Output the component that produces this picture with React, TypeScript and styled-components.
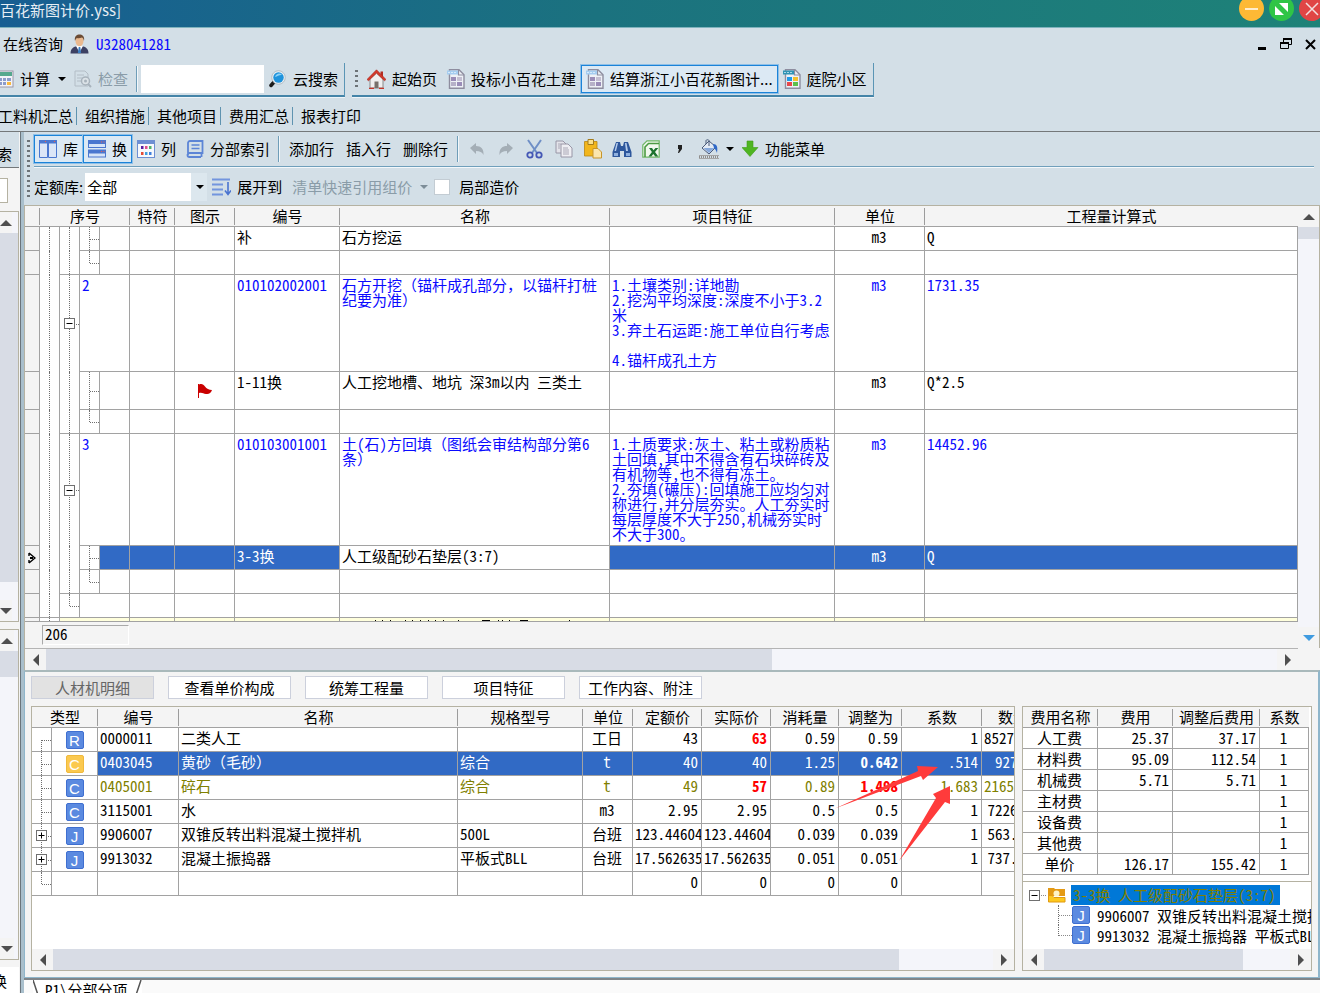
import React from "react";
import styled, { createGlobalStyle, css } from "styled-components";

const UI = '"Noto Sans CJK SC", "Noto Sans", sans-serif';
const MONO = '"Noto Sans Mono CJK SC", "Noto Sans CJK SC", "Liberation Mono", monospace';
const C = {
  bar: "#d3dfe7",
  pane: "#f4f4f4",
  line: "#a2a2a2",
  tan: "#b5b2a2",
  thumb: "#d8dce5",
  track: "#f4f5fa",
  sel: "#316ac5",
  blue: "#0a0aff",
  olive: "#808000",
  red: "#ff0000",
};

const Global = createGlobalStyle`
  *, *::before, *::after { box-sizing: border-box; }
  body { margin: 0; overflow: hidden; background: ${C.bar}; }
  button, input, select { font: inherit; color: inherit; margin: 0; }
`;

const Page = styled.div`
  display: flex;
  flex-direction: column;
  height: 100vh;
  overflow: hidden;
  background: ${C.bar};
  color: #000;
  font: 15px/20px ${UI};
  white-space: nowrap;
`;

const TitleBar = styled.header`
  display: flex;
  justify-content: space-between;
  flex: none;
  height: 28px;
  color: #e6eef4;
  background: linear-gradient(90deg, #175e92 0%, #1b727f 45%, #1e8278 100%);
  border-bottom: 1px solid #7fb3bd;
  overflow: hidden;
`;
const WindowButtons = styled.div`
  display: flex;
  gap: 5px;
  margin: -4px -4px 0 0;
`;
const RoundButton = styled.button<{ $c: string }>`
  width: 25px;
  height: 25px;
  padding: 0;
  border: 0;
  border-radius: 50%;
  background: ${(p) => p.$c};
  svg { display: block; }
`;

const AccountRow = styled.div`
  display: flex;
  align-items: center;
  flex: none;
  height: 34px;
  padding: 0 2px 2px 3px;
  gap: 7px;
`;
const Account = styled.a`
  font-family: ${MONO};
  color: ${C.blue};
  text-decoration: none;
`;
const ChildButtons = styled.div`
  display: flex;
  gap: 8px;
  margin-left: auto;
`;
const FlatButton = styled.button`
  width: 16px;
  height: 16px;
  padding: 0;
  border: 0;
  background: none;
  svg { display: block; }
`;

const Rows = styled.div`
  display: flex;
  flex: none;
  gap: 7px;
  height: 36px;
  padding-top: 1px;
`;
const BarGroup = styled.div`
  display: flex;
  align-items: center;
  height: 34px;
  padding: 0 1px 1px 0;
  border-right: 1px solid #5a95b5;
  border-bottom: 2px solid #4484a8;
  box-shadow: 0 1px 0 #eef4f8;
`;
const Tool = styled.button<{ $on?: boolean; $off?: boolean; $cut?: boolean }>`
  display: flex;
  align-items: center;
  flex: none;
  gap: 6px;
  height: 28px;
  padding: 0 5px;
  border: 0;
  background: none;
  ${(p) => p.$cut && css`margin-left: -9px;`}
  ${(p) => p.$off && css`color: #8a9ca8;`}
  ${(p) => p.$on && css`background: #dce9f4; box-shadow: inset 0 0 0 1px #1b83d8, 0 0 0 1px #8fc0e8;`}
  svg { display: block; flex: none; }
`;
const TextTool = styled(Tool)`
  padding: 0 6px;
`;
const IconTool = styled(Tool)`
  width: 29px;
  justify-content: center;
`;
const DropTool = styled.button`
  width: 14px;
  height: 28px;
  padding: 0;
  border: 0;
  background: none;
  svg { display: block; margin: auto; }
`;
const Sep = styled.span`
  flex: none;
  width: 2px;
  height: 26px;
  margin: 0 3px;
  border-left: 1px solid #6f9db8;
  border-right: 1px solid #f2f7fa;
`;
const Grip = styled.span<{ $tall?: boolean }>`
  flex: none;
  align-self: center;
  width: 3px;
  height: ${(p) => (p.$tall ? 58 : 18)}px;
  margin: 0 4px 0 3px;
  background: repeating-linear-gradient(#6d7377 0 2px, transparent 2px 5px);
`;
const SearchBox = styled.input`
  width: 123px;
  height: 28px;
  border: 0;
  padding: 0 4px;
  background: #fff;
`;

const ViewTabs = styled.nav`
  display: flex;
  align-items: center;
  flex: none;
  height: 34px;
  padding-top: 3px;
  border-bottom: 1px solid #74787a;
  overflow: hidden;
`;
const ViewTab = styled.a<{ $first?: boolean }>`
  margin-left: ${(p) => (p.$first ? -2 : 8)}px;
  padding-right: 3px;
  height: 18px;
  line-height: 18px;
  color: inherit;
  text-decoration: none;
  border-right: 1px solid #5f93b0;
  &:last-child { border: 0; }
`;

const Workspace = styled.div`
  display: flex;
  flex: 1;
  min-height: 0;
`;

const Side = styled.aside`
  display: flex;
  flex-direction: column;
  flex: none;
  width: 24px;
  border-right: 3px solid #a9bfcc;
  box-shadow: inset -1px 0 0 #6b757c;
  background: ${C.pane};
  padding-right: 2px;
`;
const SideCut = styled.div<{ $h: number; $r: number; $bg: string; $head?: boolean }>`
  display: flex;
  flex: none;
  align-items: center;
  justify-content: flex-end;
  height: ${(p) => p.$h}px;
  padding-top: ${(p) => (p.$head ? 8 : 2)}px;
  padding-right: ${(p) => p.$r}px;
  background: ${(p) => p.$bg};
  border-bottom: ${(p) => (p.$head ? "1px solid #74787a" : 0)};
  overflow: hidden;
`;
const SideField = styled.div`
  flex: none;
  width: 8px;
  height: 25px;
  margin: 10px 0 8px;
  background: #fff;
  border: solid ${C.tan};
  border-width: 1px 1px 1px 0;
`;
const SideScroll = styled.div<{ $grow: number }>`
  display: flex;
  flex: ${(p) => p.$grow} 0 0;
  flex-direction: column;
  min-height: 0;
  margin-bottom: 7px;
  border: solid ${C.tan};
  border-width: 1px 1px 1px 0;
  background: ${C.track};
`;

const Main = styled.main`
  display: flex;
  flex: 1;
  flex-direction: column;
  min-width: 0;
`;
const GridTools = styled.div`
  display: flex;
  flex: none;
  height: 73px;
`;
const ToolLines = styled.div`
  flex: 1;
  min-width: 0;
`;
const ToolLine = styled.div`
  display: flex;
  align-items: center;
  height: 35px;
  margin-right: 6px;
  border-bottom: 1px solid #6f9fbb;
  box-shadow: 0 1px 0 #f4f8fb;
`;
const FilterLine = styled.div`
  display: flex;
  align-items: center;
  height: 38px;
  padding-top: 1px;
`;
const SelectBox = styled.span`
  position: relative;
  display: flex;
  width: 122px;
  height: 28px;
  margin: 0 0 0 2px;
  background: linear-gradient(90deg, #fff 106px, #dce7ee 106px);
  svg { position: absolute; right: 3px; top: 12px; pointer-events: none; }
`;
const Select = styled.select`
  width: 100%;
  padding: 0 2px;
  border: 0;
  appearance: none;
  background: none;
`;
const Check = styled.input`
  appearance: none;
  width: 16px;
  height: 16px;
  margin: 0 9px 0 3px;
  background: #fff;
  border: 1px solid #c3ccd3;
`;

const GridBlock = styled.section`
  display: flex;
  flex: none;
  border-top: 1px solid ${C.tan};
  border-left: 1px solid ${C.tan};
  background: ${C.pane};
`;
const GridLeft = styled.div`
  flex: 1;
  min-width: 0;
`;

const Table = styled.table<{ $extra?: number }>`
  width: calc(100% + ${(p) => p.$extra || 0}px);
  table-layout: fixed;
  border-collapse: separate;
  border-spacing: 0;
  background: #fff;
  font: 15px/15px ${MONO};
  white-space: pre;
`;
const Th = styled.th`
  position: relative;
  height: 21px;
  padding: 0;
  font-weight: 400;
  line-height: 20px;
  text-align: center;
  overflow: hidden;
  background: ${C.pane};
  border-bottom: 1px solid ${C.line};
  &:not(:last-child)::after {
    content: "";
    position: absolute;
    right: 0;
    top: 2px;
    bottom: 1px;
    border-right: 1px solid #9c9c9c;
  }
`;
const Tr = styled.tr<{ $h: number }>`
  height: ${(p) => p.$h}px;
`;
type TdProps = { $a?: "left" | "center" | "right"; $c?: string; $bg?: string; $b?: boolean; $mid?: boolean };
const Td = styled.td<TdProps>`
  padding: 2px 3px 0 2px;
  vertical-align: top;
  overflow: hidden;
  text-align: ${(p) => p.$a || "left"};
  color: ${(p) => p.$c || "#000"};
  background: ${(p) => p.$bg || "#fff"};
  font-weight: ${(p) => (p.$b ? 700 : 400)};
  border-right: 1px solid ${C.line};
  border-bottom: 1px solid ${C.line};
  ${(p) => p.$mid && css`
    vertical-align: middle;
    padding: 0;
    svg, span { display: block; margin: 0 auto; }
  `}
`;
const TreeTd = styled.td<{ $v?: "full" | "top" | "bottom"; $h?: boolean; $open?: boolean }>`
  position: relative;
  padding: 0;
  background: #fff;
  vertical-align: middle;
  border-right: 1px solid ${C.line};
  border-bottom: ${(p) => (p.$open ? 0 : 1)}px solid ${C.line};
  ${(p) => p.$v && css`
    &::before {
      content: "";
      position: absolute;
      left: 9px;
      top: ${p.$v === "bottom" ? "50%" : "0"};
      bottom: ${p.$v === "top" ? "50%" : "0"};
      border-left: 1px dotted #6e6e6e;
    }
  `}
  ${(p) => p.$h && css`
    &::after {
      content: "";
      position: absolute;
      left: 10px;
      right: 0;
      top: 50%;
      border-top: 1px dotted #6e6e6e;
    }
  `}
`;
const Expander = styled.button`
  position: relative;
  z-index: 1;
  display: block;
  flex: none;
  width: 11px;
  height: 11px;
  margin: 0 auto;
  padding: 0;
  border: 1px solid #707070;
  background: #fff;
  svg { display: block; }
`;
const Edge = styled.td`
  padding: 0;
  background: ${C.pane};
  border-right: 1px solid ${C.line};
  border-bottom: 1px solid ${C.line};
  svg { display: block; margin: 0 auto; }
`;
const Peek = styled.td`
  height: 4px;
  padding: 0;
  background: #ffffdc;
  border-right: 1px solid ${C.line};
  border-bottom: 1px solid ${C.line};
  svg { display: block; }
`;
const CountBar = styled.div`
  display: flex;
  align-items: center;
  height: 27px;
  padding-left: 17px;
  border-bottom: 1px solid #b4b4b4;
`;
const Count = styled.output`
  width: 87px;
  height: 20px;
  padding-left: 2px;
  font: 15px/16px ${MONO};
  border: solid;
  border-width: 1px;
  border-color: #a9a9a9 #fff #fff #a9a9a9;
`;

const HScroll = styled.div`
  display: flex;
  flex: none;
  height: 21px;
  background: ${C.track};
`;
const VScroll = styled.div`
  display: flex;
  flex-direction: column;
  flex: none;
  width: 22px;
  margin-bottom: 22px;
  border-right: 1px solid ${C.tan};
  background: ${C.track};
`;
const Arrow = styled.button<{ $w?: number }>`
  display: flex;
  align-items: center;
  justify-content: center;
  flex: none;
  width: ${(p) => p.$w || 21}px;
  height: 21px;
  padding: 0;
  border: 0;
  background: ${C.pane};
`;
const Lane = styled.div<{ $col?: boolean }>`
  display: flex;
  flex: 1;
  flex-direction: ${(p) => (p.$col ? "column" : "row")};
  min-height: 0;
`;
const Thumb = styled.div<{ $p: number }>`
  flex: 0 0 ${(p) => p.$p}%;
  background: ${C.thumb};
`;

const Detail = styled.section`
  display: flex;
  flex: 1;
  flex-direction: column;
  min-height: 0;
  padding: 4px 6px 6px 6px;
  background: ${C.pane};
  border: solid #8fb6cb;
  border-width: 2px 2px 1px 1px;
  border-top-color: #a9b9bb;
`;
const DetailTabs = styled.div`
  display: flex;
  flex: none;
  gap: 14px;
  font-family: ${MONO};
`;
const DetailTab = styled.button<{ $on?: boolean }>`
  width: 123px;
  height: 23px;
  padding: 0;
  line-height: 19px;
  border: 1px solid #ccd0dc;
  background: ${(p) => (p.$on ? "#e2e2e2" : "#fff")};
  color: ${(p) => (p.$on ? "#666" : "#000")};
`;
const DetailBody = styled.div`
  display: flex;
  flex: 1;
  gap: 7px;
  min-height: 0;
  margin-top: 7px;
`;
const Frame = styled.div`
  position: relative;
  display: flex;
  flex: 1;
  flex-direction: column;
  justify-content: space-between;
  min-width: 0;
  border: 1px solid ${C.tan};
  background: #fff;
  overflow: hidden;
`;
const RightFrame = styled(Frame)`
  flex: 0 0 290px;
`;
const CostArea = styled.div`
  padding-right: 2px;
  padding-bottom: 6px;
  border-bottom: 1px solid ${C.tan};
`;
const Marks = styled.svg`
  position: absolute;
  right: 60px;
  top: 53px;
  pointer-events: none;
`;
const Badge = styled.span<{ $gold?: boolean }>`
  display: block;
  flex: none;
  width: 18px;
  height: 18px;
  border: 1px solid ${(p) => (p.$gold ? "#f0b93c" : "#3f6fd0")};
  border-radius: 2px;
  background: ${(p) => (p.$gold ? "#fbc94f" : "#5b8ae0")};
  color: #fff;
  font: 15px/17px "Liberation Sans", sans-serif;
  text-align: center;
`;
const CostTree = styled.ul`
  flex: 1;
  margin: 3px 0 0;
  padding: 0 0 0 6px;
  list-style: none;
  font: 15px/19px ${MONO};
  overflow: hidden;
`;
const Node = styled.li<{ $child?: boolean }>`
  display: flex;
  align-items: center;
  gap: 7px;
  height: 20px;
  ${(p) => p.$child && css`
    padding-left: 29px;
    &::before {
      content: "";
      flex: none;
      width: 14px;
      height: 20px;
      margin-right: -7px;
      border-left: 1px dotted #6e6e6e;
      background: repeating-linear-gradient(90deg, #8a8a8a 0 1px, transparent 1px 2px) 0 10px / 100% 1px no-repeat;
    }
    &:last-child::before { height: 11px; align-self: flex-start; }
  `}
`;
const NodeBox = styled.span`
  flex: none;
  width: 18px;
  margin-right: -7px;
  background: repeating-linear-gradient(90deg, #8a8a8a 0 1px, transparent 1px 2px) 0 5px / 100% 1px no-repeat;
  button { margin: 0; }
`;
const NodeSel = styled.span`
  height: 20px;
  margin-left: -2px;
  padding: 0 4px 0 2px;
  background: #0078d7;
  color: ${C.olive};
`;
const BottomTabs = styled.nav`
  display: flex;
  flex: none;
  height: 15px;
  padding-left: 9px;
  background: #fafafa;
  border-top: 2px solid #80868a;
  font-family: ${MONO};
  overflow: hidden;
`;
const BottomTab = styled.a`
  display: flex;
  align-items: flex-start;
  gap: 6px;
  height: 20px;
  background: #fff;
  color: inherit;
  text-decoration: none;
  svg { display: block; }
`;

/* ---------- glyphs ---------- */
const Tri = ({ d = "down", c = "#4f4f4f", s = 6 }: { d?: "up" | "down" | "left" | "right"; c?: string; s?: number }) => {
  const pts = {
    up: `0,${s} ${2 * s},${s} ${s},0`,
    down: `0,0 ${2 * s},0 ${s},${s}`,
    left: `${s},0 ${s},${2 * s} 0,${s}`,
    right: `0,0 0,${2 * s} ${s},${s}`,
  }[d];
  const flat = d === "up" || d === "down";
  return (
    <svg width={flat ? 2 * s : s} height={flat ? s : 2 * s}>
      <polygon points={pts} fill={c} />
    </svg>
  );
};
const I = ({ children }: { children: React.ReactNode }) => (
  <svg width="18" height="18" viewBox="0 0 18 18" fill="none">{children}</svg>
);
const Plus = ({ plus }: { plus?: boolean }) => (
  <svg width="9" height="9"><path d={plus ? "M1.5 4.5h6M4.5 1.5v6" : "M1.5 4.5h6"} stroke="#000" /></svg>
);
const CalcIcon = () => (
  <I>
    <rect x="1" y="1" width="16" height="16" fill="#f3f3f8" stroke="#9a96a8" />
    <rect x="2" y="2" width="14" height="4" fill="#55a88e" />
    <path d="M3 8h3v3H3zM7 8h3v3H7zM3 12h3v3H3zM7 12h3v3H7zM11 8h4v3h-4z" fill="#8c9ccb" />
    <path d="M11 12h4v3h-4z" fill="#f9b93e" />
  </I>
);
const CheckIcon = () => (
  <I>
    <path d="M1 1h10l3 3v5M14 16H1V1" stroke="#b3bdc6" />
    <path d="M3 5h7M3 8h6M3 11h4" stroke="#b3bdc6" />
    <circle cx="11.500" cy="11" r="4" fill="#dce3e8" stroke="#a8b3bc" strokeWidth="1.500" />
    <circle cx="11.500" cy="11" r="1.500" fill="#a8b3bc" />
    <path d="M14 14l3 3" stroke="#a8b3bc" strokeWidth="2" />
  </I>
);
const Magnifier = () => (
  <I>
    <path d="M5 12l-3 3.500" stroke="#1b1b1b" strokeWidth="3.500" strokeLinecap="round" />
    <circle cx="9.500" cy="7.500" r="6.800" fill="#e9eef1" stroke="#a9b4bd" strokeWidth=".8" />
    <circle cx="9.500" cy="7.500" r="5.200" fill="#1f93dc" />
    <path d="M6 7a4 4 0 0 1 7-2c-2.500-.5-4.500 1.500-7 2z" fill="#8ed3f7" />
  </I>
);
const House = () => (
  <svg width="19" height="20" viewBox="0 0 19 20">
    <path d="M3 10v9h13v-9L9.500 4z" fill="#efefef" stroke="#8a8a8a" />
    <path d="M13.500 2.500H16V8h-2.500z" fill="#b32d22" />
    <path d="M0 10.500L9.500.8l9.500 9.700-1.600 1.200-7.900-7.600-7.900 7.600z" fill="#d5392b" stroke="#a82318" strokeWidth=".6" />
    <path d="M7.500 12.500h4V19h-4z" fill="#77706a" />
    <path d="M2 19.300h5M12 19.300h5" stroke="#c83428" strokeWidth="1.200" />
  </svg>
);
const Doc = ({ vivid }: { vivid?: boolean }) => (
  <svg width="18" height="20" viewBox="0 0 18 20" fill="none">
    <path d="M2.500.8h9.500l5 5v13.400H2.500z" fill="#eef1f6" stroke="#8e8d9f" strokeWidth="1.400" />
    <path d="M11.500 1v5H17" stroke="#8e8d9f" strokeWidth="1.200" />
    <rect x="0" y="1.500" width="11" height="4" fill={vivid ? "#2f93b4" : "#a5cdf0"} />
    <path d="M1 3.500h9" stroke={vivid ? "#a7d7e6" : "#d6e9f9"} strokeDasharray="2 1" />
    <rect x="4" y="8" width="5" height="4" fill={vivid ? "#1e9ae8" : "#9a8db8"} />
    <rect x="10" y="8" width="5" height="4" fill={vivid ? "#f3c02c" : "#c4bfd2"} />
    <rect x="4" y="13" width="5" height="4" fill={vivid ? "#e7474a" : "#b6b1c8"} />
    <rect x="10" y="13" width="5" height="4" fill={vivid ? "#5cc04c" : "#9a8db8"} />
  </svg>
);
const Person = () => (
  <svg width="19" height="20" viewBox="0 0 19 20">
    <path d="M.5 19.500c0-5 3-7.500 9-7.500s9 2.500 9 7.500z" fill="#3d4163" />
    <path d="M6 12l3.500 6.500L13 12l-3.500-1z" fill="#fff" />
    <path d="M8.700 13h1.600l.8 6H7.900z" fill="#3a7fc4" />
    <ellipse cx="9.500" cy="7" rx="4" ry="5.300" fill="#eab98f" />
    <path d="M5 7C4 2 7 .5 9.500.5S15 2 14 7c-.5-2-1-3-2-3.500-2 .8-4 .8-5 .5-1 .5-1.500 1.500-2 3z" fill="#6b4c35" />
  </svg>
);
const Panels = ({ rows }: { rows?: boolean }) => (
  <I>
    {rows ? (
      <>
        <path d="M0 0h18v8H0zM0 9.500h18v8H0z" fill="#4a77cf" />
        <path d="M1 4h16v3H1zM1 13.500h16v3H1z" fill="#d6e4f7" />
        <path d="M13 2h1M15.500 2h1M13 11.500h1M15.500 11.500h1" stroke="#f05b4c" />
      </>
    ) : (
      <>
        <path d="M.5.500h8v17h-8zM9.500.500h8v17h-8z" fill="#dbe6f7" stroke="#4a77cf" />
        <path d="M0 0h18v3.500H0z" fill="#4a77cf" />
        <path d="M6 1.500h1M15 1.500h1" stroke="#f05b4c" />
      </>
    )}
  </I>
);
const ColumnsIcon = () => (
  <I>
    <rect x=".5" y=".5" width="17" height="17" fill="#f7f9fd" stroke="#6d8fd2" />
    <path d="M0 0h18v4H0z" fill="#6d8fd2" />
    <path d="M4 6h2.500v3H4z" fill="#5a1f9f" /><path d="M8 6h2.500v3H8z" fill="#e0508a" /><path d="M12 6h2.500v3H12z" fill="#4fb36c" />
    <path d="M4 12h2.500v3H4z" fill="#e44b35" /><path d="M8 12h2.500v3H8z" fill="#3f9fdc" /><path d="M12 12h2.500v3H12z" fill="#3f7fdc" />
  </I>
);
const BookIcon = () => (
  <I>
    <path d="M4 1h12.500v12H3.500a2 2 0 0 0 0 4H15M2 15V3a2 2 0 0 1 2-2M15.500 13v4" stroke="#5c85d6" strokeWidth="1.800" />
    <path d="M5.500 5h8M5.500 8.500h8" stroke="#5c85d6" strokeWidth="1.600" />
  </I>
);
const Undo = ({ flip }: { flip?: boolean }) => (
  <svg width="16" height="14" viewBox="0 0 16 14">
    <path
      d={flip ? "M15 6L9 1v3C4 4 1 7 1.500 13 3 10 5 9 9 9v3z" : "M1 6l6-5v3c5 0 8 3 7.500 9C13 10 11 9 7 9v3z"}
      fill="#a4aeb6"
    />
  </svg>
);
const Scissors = () => (
  <svg width="17" height="20" viewBox="0 0 17 20" fill="none">
    <path d="M2 1l9 13M15 1L6 14" stroke="#6f8fc6" strokeWidth="2" />
    <circle cx="4" cy="16" r="2.700" stroke="#4457b5" strokeWidth="1.800" />
    <circle cx="13" cy="16" r="2.700" stroke="#4457b5" strokeWidth="1.800" />
  </svg>
);
const CopyIcon = () => (
  <I>
    <path d="M1 1h7l3 3v9H1z" fill="#e3e3ea" stroke="#9896a6" />
    <path d="M6 4h7l4 4v9H6z" fill="#eeeef3" stroke="#9896a6" />
    <path d="M3 4h3M3 6h2M3 8h2M8 8h5M8 10h6M8 12h6M8 14h6" stroke="#aaa8b6" />
  </I>
);
const Paste = () => (
  <svg width="18" height="20" viewBox="0 0 18 20">
    <path d="M.5 2.500h12.500V17H.5z" fill="#f2b61c" stroke="#b98512" strokeWidth=".8" />
    <path d="M4 .5h5.500v5H4z" fill="#fbe08a" stroke="#a37b1c" />
    <path d="M9 9.500h5l3.500 3.500v6H9z" fill="#fbe6ae" stroke="#c7952a" />
  </svg>
);
const Binoculars = () => (
  <svg width="20" height="17" viewBox="0 0 20 17">
    <path d="M4 1h4l1 4h2l1-4h4l3.500 10v5H12v-6H8v6H.5v-5z" fill="#2e579c" />
    <path d="M4.500 2H6L4 10H2.500zM13 2h1.500l1.500 8h-2z" fill="#b7cdec" />
    <path d="M2 12h4v3H2zM14 12h4v3h-4z" fill="#8fb0de" />
  </svg>
);
const Excel = () => (
  <I>
    <path d="M5 .8h12.200v16.400H.8V5z" fill="#f1f8ee" stroke="#6fb765" strokeWidth="1.200" />
    <path d="M3 17V7l3.500-3.500H17" stroke="#4b9a42" strokeWidth="1.600" fill="none" />
    <path d="M7 8h3l1.500 2.200L13.500 8h2.800l-3.300 4 3.300 4.500h-3L11.300 14l-2 2.500H6.500l3.400-4.500z" fill="#1d7430" />
  </I>
);
const Bucket = () => (
  <svg width="20" height="20" viewBox="0 0 20 20" fill="none">
    <path d="M3 9l7-7 7 6-7 7z" fill="#e3eaf4" stroke="#4a5a78" />
    <path d="M4.500 9h11L10 14z" fill="#87a9dc" />
    <path d="M7 5V1.500c0-1 3-1 3 0V7" stroke="#4a5a78" />
    <path d="M14 5c4 0 5 3 4 9-1-3-2-4-3-5z" fill="#2f68c8" />
    <path d="M0 18h20" stroke="#8f8f8f" strokeWidth="3" strokeDasharray="1 1" />
    <path d="M0 16.500h20M0 19.500h20" stroke="#a6a6a6" />
  </svg>
);
const DownArrow = () => (
  <svg width="17" height="18" viewBox="0 0 17 18"><path d="M5 1h6v6.500h5L8 16.500 0 7.500h5z" fill="#4fb522" stroke="#3f9a1a" strokeWidth=".6" /></svg>
);
const Expand = () => (
  <svg width="19" height="18" viewBox="0 0 19 18" fill="none">
    <path d="M0 1.500h18M0 6.500h11M0 11.500h11M0 16.500h11" stroke="#7395de" strokeWidth="2" />
    <path d="M16 4v12M13 12.500l3 4 3-4" stroke="#4a74d0" strokeWidth="1.600" />
  </svg>
);
const Flag = () => (
  <svg width="14" height="14" viewBox="0 0 14 14">
    <path d="M.5 0v14" stroke="#c00" /><path d="M1 .5c3-1 4.500 0 6 2S11 6 14 6c-1 3-3 4.500-6 4S4 8 1 9z" fill="#c90000" />
  </svg>
);
const Folder = () => (
  <svg width="19" height="16" viewBox="0 0 19 16">
    <path d="M1 1h6l1 1h10v7H1z" fill="#e49a14" /><circle cx="9.500" cy="6.500" r="3" fill="#fff3c4" />
    <path d="M1.500 8.500H5l2 2h11v4.500H1.500z" fill="#fdc81e" stroke="#e09a10" />
  </svg>
);

/* ---------- data ---------- */
const mainCols = [15, 20, 20, 20, 30, 45, 60, 105, 270, 225, 90];

type Rest = { flag?: boolean; code?: string; name?: string; feat?: string; unit?: string; qty?: string; c?: string; sel?: boolean };
const RestCells = ({ flag, code, name, feat, unit, qty, c, sel }: Rest) => {
  const s = sel ? { $bg: C.sel, $c: "#fff" } : { $c: c };
  return (
    <>
      <Td {...s} />
      <Td {...s} $mid>{flag && <Flag />}</Td>
      <Td {...s}>{code}</Td>
      <Td $c={c}>{name}</Td>
      <Td {...s}>{feat}</Td>
      <Td {...s} $a="center">{unit}</Td>
      <Td {...s}>{qty}</Td>
    </>
  );
};

type Part = {
  k: string; code: string; name: string; spec: string; unit: string;
  p: string; a: string; u: string; t: string; f: string; q: string;
  hot?: boolean; sel?: boolean; adj?: boolean; c?: string;
};
const parts: Part[] = [
  { k: "R", code: "0000011", name: "二类人工", spec: "", unit: "工日", p: "43", a: "63", u: "0.59", t: "0.59", f: "1", q: "8527.246", hot: true },
  { k: "C", code: "0403045", name: "黄砂（毛砂）", spec: "综合", unit: "t", p: "40", a: "40", u: "1.25", t: "0.642", f: ".514", q: "9278.8", sel: true, adj: true },
  { k: "C", code: "0405001", name: "碎石", spec: "综合", unit: "t", p: "49", a: "57", u: "0.89", t: "1.498", f: "1.683", q: "21650.534", hot: true, adj: true, c: C.olive },
  { k: "C", code: "3115001", name: "水", spec: "", unit: "m3", p: "2.95", a: "2.95", u: "0.5", t: "0.5", f: "1", q: "7226.48" },
  { k: "J", code: "9906007", name: "双锥反转出料混凝土搅拌机", spec: "500L", unit: "台班", p: "123.44604", a: "123.44604", u: "0.039", t: "0.039", f: "1", q: "563.665" },
  { k: "J", code: "9913032", name: "混凝土振捣器", spec: "平板式BLL", unit: "台班", p: "17.562635", a: "17.562635", u: "0.051", t: "0.051", f: "1", q: "737.101" },
  { k: "", code: "", name: "", spec: "", unit: "", p: "0", a: "0", u: "0", t: "0", f: "", q: "" },
];
const partCols = [20, 46, 81, 0, 125, 50, 69, 69, 68, 63, 80, 62];

const costs = [
  ["人工费", "25.37", "37.17"],
  ["材料费", "95.09", "112.54"],
  ["机械费", "5.71", "5.71"],
  ["主材费", "", ""],
  ["设备费", "", ""],
  ["其他费", "", ""],
  ["单价", "126.17", "155.42"],
];

const Cols = ({ w }: { w: number[] }) => (
  <colgroup>{w.map((n, i) => <col key={i} width={n || undefined} />)}</colgroup>
);

const feat2 = "1.土壤类别:详地勘\n2.挖沟平均深度:深度不小于3.2\n米\n3.弃土石运距:施工单位自行考虑\n\n4.锚杆成孔土方";
const feat3 = "1.土质要求:灰土、粘土或粉质粘\n土回填,其中不得含有石块碎砖及\n有机物等,也不得有冻土。\n2.夯填(碾压):回填施工应均匀对\n称进行,并分层夯实。人工夯实时\n每层厚度不大于250,机械夯实时\n不大于300。";

const Box = ({ plus }: { plus?: boolean }) => (
  <Expander aria-label={plus ? "展开" : "折叠"}><Plus plus={plus} /></Expander>
);

const MainGrid = () => (
  <Table>
    <Cols w={[...mainCols, 0]} />
    <thead>
      <tr>
        <Th />
        <Th colSpan={4}>序号</Th>
        {["特符", "图示", "编号", "名称", "项目特征", "单位", "工程量计算式"].map((t) => <Th key={t}>{t}</Th>)}
      </tr>
    </thead>
    <tbody>
      <Tr $h={24}>
        <Edge /><TreeTd $v="full" $open /><TreeTd $v="full" $open /><TreeTd $v="full" $h /><Td />
        <RestCells code="补" name="石方挖运" unit="m3" qty="Q" />
      </Tr>
      <Tr $h={24}>
        <Edge /><TreeTd $v="full" $open /><TreeTd $v="full" /><TreeTd $v="top" $h /><Td />
        <RestCells />
      </Tr>
      <Tr $h={97}>
        <Edge /><TreeTd $v="full" $open /><TreeTd $v="full" $h $open><Box /></TreeTd><Td colSpan={2} $c={C.blue}>2</Td>
        <RestCells c={C.blue} code="010102002001" name={"石方开挖（锚杆成孔部分，以锚杆打桩\n纪要为准）"} feat={feat2} unit="m3" qty="1731.35" />
      </Tr>
      <Tr $h={38}>
        <Edge /><TreeTd $v="full" $open /><TreeTd $v="full" $open /><TreeTd $v="full" $h /><Td />
        <RestCells flag code="1-11换" name="人工挖地槽、地坑 深3m以内 三类土" unit="m3" qty="Q*2.5" />
      </Tr>
      <Tr $h={24}>
        <Edge /><TreeTd $v="full" $open /><TreeTd $v="full" /><TreeTd $v="top" $h /><Td />
        <RestCells />
      </Tr>
      <Tr $h={112}>
        <Edge /><TreeTd $v="full" $open /><TreeTd $v="full" $h $open><Box /></TreeTd><Td colSpan={2} $c={C.blue}>3</Td>
        <RestCells c={C.blue} code="010103001001" name={"土(石)方回填（图纸会审结构部分第6\n条）"} feat={feat3} unit="m3" qty="14452.96" />
      </Tr>
      <Tr $h={24}>
        <Edge>
          <svg width="8" height="12" viewBox="0 0 8 12" fill="none"><path d="M1 1v3M1 8v3M1 1l6 5-6 5" stroke="#000" strokeWidth="1.400" /><path d="M2 6h3" stroke="#000" strokeWidth="2" /></svg>
        </Edge>
        <TreeTd $v="full" $open /><TreeTd $v="full" $open /><TreeTd $v="full" $h /><Td $bg={C.sel} />
        <RestCells sel code="3-3换" name="人工级配砂石垫层(3:7)" unit="m3" qty="Q" />
      </Tr>
      <Tr $h={24}>
        <Edge /><TreeTd $v="full" $open /><TreeTd $v="full" /><TreeTd $v="top" $h /><Td />
        <RestCells />
      </Tr>
      <Tr $h={24}>
        <Edge /><TreeTd $v="full" /><TreeTd $v="top" $h /><Td colSpan={2} />
        <RestCells />
      </Tr>
      <Tr $h={4}>
        <Edge /><TreeTd $v="full" />
        <Peek colSpan={3} /><Peek /><Peek /><Peek />
        <Peek>
          <svg width="240" height="3">
            <path d="M35 2.500h1M42 2.500h1M50 2.500h1M65 2.500h1M72 2.500h1M80 2.500h1M88 2.500h1M95 2.500h1M103 2.500h1M118 2.500h1M142 2.500h8M158 2.500h1M162 2.500h1M169 2.500h1M180 2.500h8M229 2.500h1" stroke="#000" />
          </svg>
        </Peek>
        <Peek /><Peek /><Peek />
      </Tr>
    </tbody>
  </Table>
);

const PartsGrid = () => (
  <Table $extra={30}>
    <Cols w={partCols} />
    <thead>
      <tr>
        <Th colSpan={2}>类型</Th>
        {["编号", "名称", "规格型号", "单位", "定额价", "实际价", "消耗量", "调整为", "系数", "数量"].map((t) => <Th key={t}>{t}</Th>)}
      </tr>
    </thead>
    <tbody>
      {parts.map((r, i) => {
        const s = { $c: r.sel ? "#fff" : r.c, $bg: r.sel ? C.sel : undefined };
        return (
          <Tr $h={24} key={i}>
            <TreeTd $v={i === 0 ? "bottom" : r.k ? "full" : "top"} $h>{r.k === "J" && <Box plus />}</TreeTd>
            <Td $mid>{r.k && <Badge $gold={r.sel}>{r.k}</Badge>}</Td>
            <Td {...s}>{r.code}</Td>
            <Td {...s}>{r.name}</Td>
            <Td {...s}>{r.spec}</Td>
            <Td {...s} $a="center">{r.unit}</Td>
            <Td {...s} $a="right">{r.p}</Td>
            <Td {...s} $a="right" $b={r.hot} $c={r.hot ? C.red : s.$c}>{r.a}</Td>
            <Td {...s} $a="right">{r.u}</Td>
            <Td {...s} $a="right" $b={r.adj} $c={r.adj && !r.sel ? C.red : s.$c}>{r.t}</Td>
            <Td {...s} $a="right">{r.f}</Td>
            <Td {...s} $a="right">{r.q}</Td>
          </Tr>
        );
      })}
    </tbody>
  </Table>
);

const CostGrid = () => (
  <Table>
    <Cols w={[75, 75, 87, 0]} />
    <thead>
      <tr>{["费用名称", "费用", "调整后费用", "系数"].map((t) => <Th key={t}>{t}</Th>)}</tr>
    </thead>
    <tbody>
      {costs.map(([n, a, b]) => (
        <Tr $h={21} key={n}>
          <Td $a="center">{n}</Td>
          <Td $a="right">{a}</Td>
          <Td $a="right">{b}</Td>
          <Td $a="center">1</Td>
        </Tr>
      ))}
    </tbody>
  </Table>
);

const HBar = ({ p }: { p: number }) => (
  <HScroll>
    <Arrow aria-label="向左"><Tri d="left" /></Arrow>
    <Lane><Thumb $p={p} /></Lane>
    <Arrow aria-label="向右"><Tri d="right" /></Arrow>
  </HScroll>
);

export default function App() {
  return (
    <Page>
      <Global />
      <TitleBar>
        <span>百花新图计价.yss]</span>
        <WindowButtons>
          <RoundButton $c="#fdb935" aria-label="最小化"><svg width="25" height="25"><path d="M6 13h13" stroke="#fff" strokeWidth="1.500" /></svg></RoundButton>
          <RoundButton $c="#2fc546" aria-label="还原"><svg width="25" height="25"><path d="M10 7h9v9zM6 10v9h9z" fill="#fff" /></svg></RoundButton>
          <RoundButton $c="#e04545" aria-label="关闭"><svg width="25" height="25"><path d="M7 7l12 12M19 7L7 19" stroke="#f3dede" strokeWidth="1.500" /></svg></RoundButton>
        </WindowButtons>
      </TitleBar>

      <AccountRow>
        <span>在线咨询</span>
        <Person />
        <Account href="#account">U328041281</Account>
        <ChildButtons>
          <FlatButton aria-label="最小化"><svg width="16" height="16"><path d="M4 12.500h8" stroke="#000" strokeWidth="3" /></svg></FlatButton>
          <FlatButton aria-label="还原"><svg width="16" height="16" fill="none" stroke="#000"><path d="M5.500 6V3.500h8v5H11" /><path d="M5 3h9" strokeWidth="2" /><path d="M2.500 7.500h8v5h-8z" /><path d="M2 7h9" strokeWidth="2" /></svg></FlatButton>
          <FlatButton aria-label="关闭"><svg width="16" height="16"><path d="M4 4l9 9M13 4l-9 9" stroke="#000" strokeWidth="2" /></svg></FlatButton>
        </ChildButtons>
      </AccountRow>

      <Rows>
        <BarGroup>
          <Tool $cut><CalcIcon />计算</Tool>
          <DropTool aria-label="计算选项"><Tri c="#000" s={4} /></DropTool>
          <Tool $off><CheckIcon />检查</Tool>
          <Sep />
          <SearchBox aria-label="云搜索" />
          <Tool><Magnifier />云搜索</Tool>
        </BarGroup>
        <BarGroup>
          <Grip />
          <Tool><House />起始页</Tool>
          <Tool><Doc />投标小百花土建</Tool>
          <Tool $on><Doc />结算浙江小百花新图计...</Tool>
          <Tool><Doc vivid />庭院小区</Tool>
        </BarGroup>
      </Rows>

      <ViewTabs>
        {["工料机汇总", "组织措施", "其他项目", "费用汇总", "报表打印"].map((t, i) => (
          <ViewTab href="#view" key={t} $first={i === 0}>{t}</ViewTab>
        ))}
      </ViewTabs>

      <Workspace>
        <Side>
          <SideCut $h={36} $r={7} $bg={C.bar} $head>索</SideCut>
          <SideField />
          <SideScroll $grow={412}>
            <Arrow $w={12} aria-label="向上"><Tri d="up" /></Arrow>
            <Lane $col><Thumb $p={95} /></Lane>
            <Arrow $w={12} aria-label="向下"><Tri /></Arrow>
          </SideScroll>
          <SideScroll $grow={331}>
            <Arrow $w={14} aria-label="向上"><Tri d="up" /></Arrow>
            <Lane $col><Thumb $p={9} /></Lane>
            <Arrow $w={14} aria-label="向下"><Tri /></Arrow>
          </SideScroll>
          <SideCut $h={26} $r={12} $bg="#fff">换</SideCut>
        </Side>

        <Main>
          <GridTools>
            <Grip $tall />
            <ToolLines>
              <ToolLine>
                <Tool $on><Panels />库</Tool>
                <Tool $on><Panels rows />换</Tool>
                <Tool><ColumnsIcon />列</Tool>
                <Tool><BookIcon />分部索引</Tool>
                <Sep />
                <TextTool>添加行</TextTool>
                <TextTool>插入行</TextTool>
                <TextTool>删除行</TextTool>
                <Sep />
                <IconTool aria-label="撤销"><Undo /></IconTool>
                <IconTool aria-label="重做"><Undo flip /></IconTool>
                <IconTool aria-label="剪切"><Scissors /></IconTool>
                <IconTool aria-label="复制"><CopyIcon /></IconTool>
                <IconTool aria-label="粘贴"><Paste /></IconTool>
                <IconTool aria-label="查找"><Binoculars /></IconTool>
                <IconTool aria-label="导出"><Excel /></IconTool>
                <IconTool aria-label="分隔符"><svg width="6" height="8"><path d="M1 0h4v4L2 8H1l1-4H1z" fill="#222" /></svg></IconTool>
                <IconTool aria-label="填充颜色"><Bucket /></IconTool>
                <DropTool aria-label="颜色选项"><Tri c="#000" s={4} /></DropTool>
                <Tool><DownArrow />功能菜单</Tool>
              </ToolLine>
              <FilterLine>
                <label htmlFor="lib">定额库:</label>
                <SelectBox>
                  <Select id="lib" defaultValue="全部"><option>全部</option></Select>
                  <Tri c="#000" s={4} />
                </SelectBox>
                <Tool><Expand />展开到</Tool>
                <Tool $off>清单快速引用组价</Tool>
                <DropTool aria-label="组价选项"><Tri c="#7d8d98" s={4} /></DropTool>
                <Check type="checkbox" id="part" />
                <label htmlFor="part">局部造价</label>
              </FilterLine>
            </ToolLines>
          </GridTools>

          <GridBlock>
            <GridLeft>
              <MainGrid />
              <CountBar><Count>206</Count></CountBar>
              <HBar p={59} />
            </GridLeft>
            <VScroll>
              <Arrow aria-label="向上"><Tri d="up" /></Arrow>
              <Lane $col><Thumb $p={3} /></Lane>
              <Arrow aria-label="向下"><Tri c="#3f9be0" /></Arrow>
            </VScroll>
          </GridBlock>

          <Detail>
            <DetailTabs>
              {["人材机明细", "查看单价构成", "统筹工程量", "项目特征", "工作内容、附注"].map((t, i) => (
                <DetailTab key={t} $on={i === 0}>{t}</DetailTab>
              ))}
            </DetailTabs>
            <DetailBody>
              <Frame>
                <PartsGrid />
                <HBar p={90} />
                <Marks width="122" height="110" viewBox="833 760 122 110" fill="#ff3b3b">
                  <polygon points="836,808.500 919,771 918,766 939,767 924,780 922,776" />
                  <polygon points="900,861 937,798 934,794 951,786 951,804 946,802" />
                </Marks>
              </Frame>
              <RightFrame>
                <CostArea><CostGrid /></CostArea>
                <CostTree>
                  <Node>
                    <NodeBox><Box /></NodeBox>
                    <Folder />
                    <NodeSel>3-3换 人工级配砂石垫层(3:7)</NodeSel>
                  </Node>
                  <Node $child><Badge>J</Badge>9906007 双锥反转出料混凝土搅拌机</Node>
                  <Node $child><Badge>J</Badge>9913032 混凝土振捣器 平板式BLL</Node>
                </CostTree>
                <HBar p={81} />
              </RightFrame>
            </DetailBody>
          </Detail>

          <BottomTabs>
            <BottomTab href="#sheet">
              <svg width="6" height="16"><path d="M0 0l5 15" stroke="#555" strokeWidth="1.500" /></svg>
              <span>P1\分部分项</span>
              <svg width="8" height="16"><path d="M7 0L2 15" stroke="#555" strokeWidth="1.500" /></svg>
            </BottomTab>
          </BottomTabs>
        </Main>
      </Workspace>
    </Page>
  );
}
